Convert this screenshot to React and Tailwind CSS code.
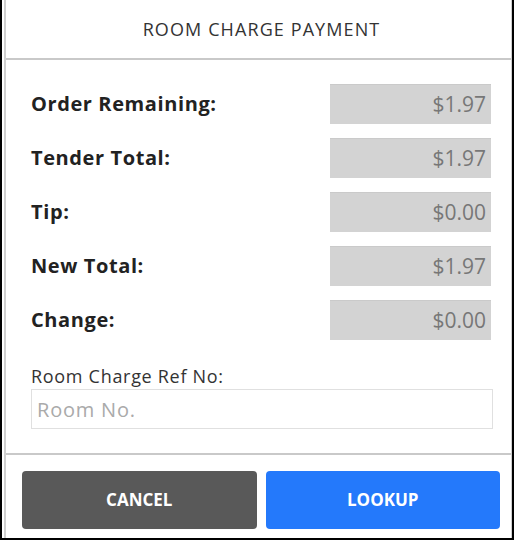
import React from "react";

const rows = [
  { label: "Order Remaining:", value: "$1.97" },
  { label: "Tender Total:", value: "$1.97" },
  { label: "Tip:", value: "$0.00" },
  { label: "New Total:", value: "$1.97" },
  { label: "Change:", value: "$0.00" },
];

const font = { fontFamily: "'Open Sans', Inter, sans-serif" };

const App = () => {
  return (
    <div
      className="w-[514px] h-[540px] bg-white border-l-2 border-r-2 border-b-2 border-black overflow-hidden"
      style={font}
    >
      <div className="h-full border-l-2 border-r border-[#cfcfcf] ml-[2px] flex flex-col">
        {/* Header */}
        <div className="h-[60px] flex items-center justify-center pl-[6px] border-b-2 border-[#c9c9c9]">
          <h1 className="text-[18px] text-[#333] tracking-[1.1px]">ROOM CHARGE PAYMENT</h1>
        </div>

        {/* Totals */}
        <div className="flex flex-col gap-[14px] pt-[24px] pl-[25px] pr-[20px]">
          {rows.map((row) => (
            <div key={row.label} className="flex items-center justify-between h-[40px]">
              <span className="text-[20px] font-bold text-[#222] tracking-[0.6px]">{row.label}</span>
              <div className="w-[161px] h-[40px] bg-[#d3d3d3] border-t border-[#cacaca] flex items-center justify-end pr-[5px] text-[21px] text-[#777]">
                {row.value}
              </div>
            </div>
          ))}
        </div>

        {/* Ref input */}
        <div className="pl-[25px] pr-[18px] pt-[26px] pb-[24px] border-b-2 border-[#c9c9c9]">
          <label className="block text-[18px] text-[#333] leading-[20px] mb-[3px] tracking-[0.7px]">
            Room Charge Ref No:
          </label>
          <input
            placeholder="Room No."
            className="w-full h-[40px] border border-[#e0e0e0] px-[5px] text-[20px] text-[#333] placeholder:text-[#aaa] outline-none tracking-[0.8px]"
            style={font}
          />
        </div>

        {/* Buttons */}
        <div className="flex gap-[9px] pl-[16px] pr-[11px] pt-[16px]">
          <button className="flex-1 h-[58px] rounded-[4px] bg-[#595959] text-white text-[17px] font-bold">
            CANCEL
          </button>
          <button className="flex-1 h-[58px] rounded-[4px] bg-[#2479fb] text-white text-[17px] font-bold">
            LOOKUP
          </button>
        </div>
      </div>
    </div>
  );
};

export default App;
